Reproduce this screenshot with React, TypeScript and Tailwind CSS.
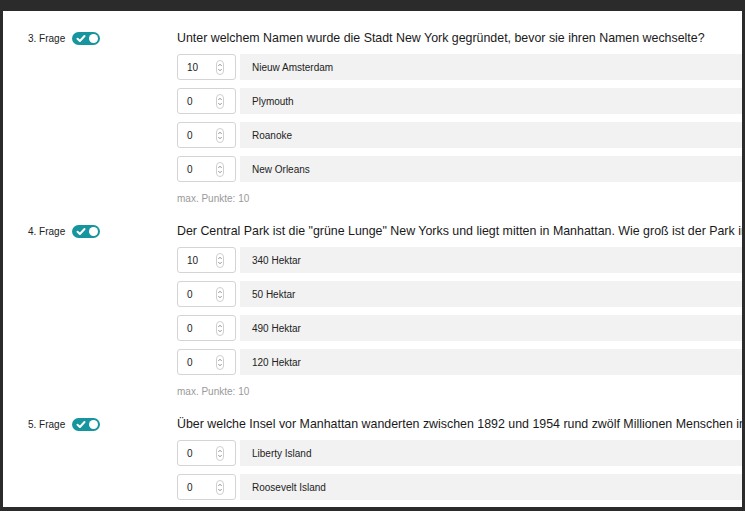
import React from "react";

type Q = { n: number; text: string; options: [string, string][] };

const questions: Q[] = [
  {
    n: 3,
    text: "Unter welchem Namen wurde die Stadt New York gegründet, bevor sie ihren Namen wechselte?",
    options: [
      ["10", "Nieuw Amsterdam"],
      ["0", "Plymouth"],
      ["0", "Roanoke"],
      ["0", "New Orleans"],
    ],
  },
  {
    n: 4,
    text: 'Der Central Park ist die "grüne Lunge" New Yorks und liegt mitten in Manhattan. Wie groß ist der Park in Hektar?',
    options: [
      ["10", "340 Hektar"],
      ["0", "50 Hektar"],
      ["0", "490 Hektar"],
      ["0", "120 Hektar"],
    ],
  },
  {
    n: 5,
    text: "Über welche Insel vor Manhattan wanderten zwischen 1892 und 1954 rund zwölf Millionen Menschen in die USA ein?",
    options: [
      ["0", "Liberty Island"],
      ["0", "Roosevelt Island"],
      ["0", "Ellis Island"],
      ["0", "Governors Island"],
    ],
  },
];

function Toggle() {
  return (
    <div className="flex h-[13px] w-[28px] items-center justify-between rounded-full bg-[#16959f] px-[2px]">
      <svg width="10" height="9" viewBox="0 0 10 9" className="ml-[2px]">
        <path d="M1.5 4.8 L3.9 7 L8.5 2" stroke="white" strokeWidth="2" fill="none" strokeLinecap="round" strokeLinejoin="round" />
      </svg>
      <div className="h-[9px] w-[9px] rounded-full bg-white" />
    </div>
  );
}

function Spinner() {
  return (
    <svg width="8" height="15" viewBox="0 0 8 15">
      <rect x="0.5" y="0.5" width="7" height="14" rx="3.5" fill="white" stroke="#cfcfcf" />
      <path d="M2.3 6 L4 4.2 L5.7 6" stroke="#8a8a8a" strokeWidth="0.9" fill="none" />
      <path d="M2.3 9 L4 10.8 L5.7 9" stroke="#8a8a8a" strokeWidth="0.9" fill="none" />
    </svg>
  );
}

export default function App() {
  return (
    <div
      className="h-[511px] w-[745px] overflow-hidden bg-[#2b2b2b] pb-[4px] pl-[3px] pr-[3px] pt-[11px]"
      style={{ fontFamily: '"Liberation Sans", Arial, sans-serif' }}
    >
      <div className="h-full overflow-hidden bg-white pt-[19px]">
        {questions.map((q) => (
          <div key={q.n} className="flex pb-[18px]">
            <div className="flex h-[16px] w-[174px] shrink-0 items-center gap-[7px] pl-[25px]">
              <span className="text-[10px] text-[#222]">{q.n}. Frage</span>
              <Toggle />
            </div>
            <div className="min-w-0 flex-1">
              <div className="whitespace-nowrap text-[12.4px] leading-[16px] text-[#1a1a1a]">{q.text}</div>
              <div className="mt-[8px] flex flex-col gap-[8px]">
                {q.options.map(([v, label], i) => (
                  <div key={i} className="flex h-[26px] gap-[4px]">
                    <div className="flex w-[59px] shrink-0 items-center justify-between rounded-[3px] border border-[#d4d4d4] bg-white pl-[9px] pr-[11px] text-[10px] text-[#222]">
                      <span>{v}</span>
                      <Spinner />
                    </div>
                    <div className="flex flex-1 items-center bg-[#f2f2f2] pl-[12px] text-[10px] text-[#222]">
                      {label}
                    </div>
                  </div>
                ))}
              </div>
              <div className="mt-[11px] text-[10px] leading-[12px] text-[#9a9a9a]">max. Punkte: 10</div>
            </div>
          </div>
        ))}
      </div>
    </div>
  );
}
